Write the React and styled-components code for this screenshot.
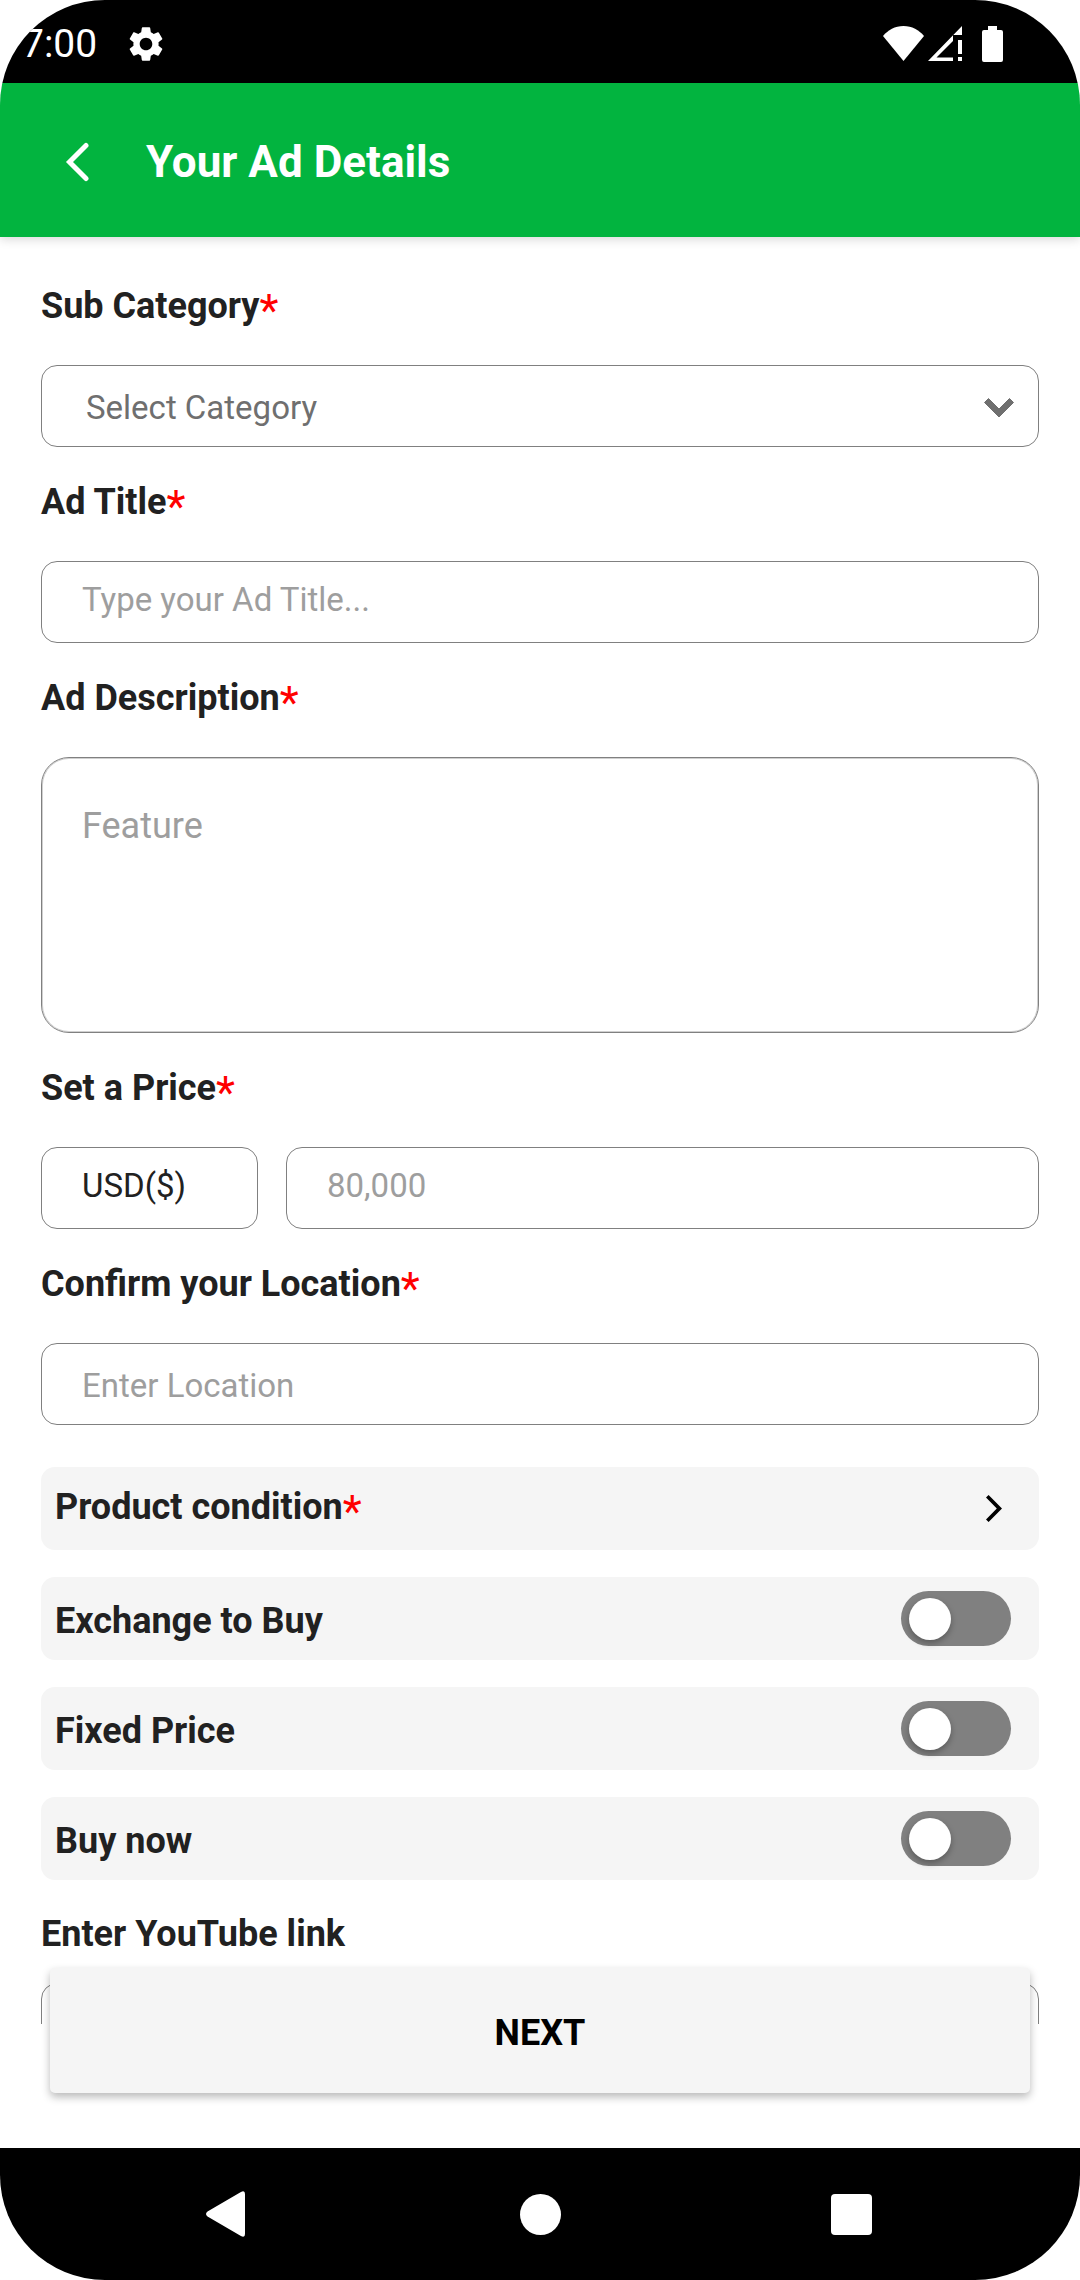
import React, { useState } from 'react'
import styled, { createGlobalStyle } from 'styled-components'
import { MdSettings } from 'react-icons/md'

const colors = {
  brand: '#02b43f',
  text: '#212121',
  muted: '#6f6f6f',
  placeholder: '#9e9e9e',
  border: '#808080',
  row: '#f5f5f5',
  track: '#808080',
  required: '#ff0000'
}

const GlobalStyle = createGlobalStyle`
  * {
    box-sizing: border-box;
  }
  body {
    margin: 0;
    background: #ffffff;
    font-family: Roboto, sans-serif;
    color: ${colors.text};
  }
  button, input, select, textarea {
    font-family: inherit;
    margin: 0;
  }
`

const Screen = styled.div`
  display: flex;
  flex-direction: column;
  height: 100vh;
  overflow: hidden;
  border-radius: 105px;
  background: #ffffff;
`

const StatusBar = styled.div`
  display: flex;
  flex: none;
  align-items: center;
  height: 83px;
  padding: 4px 77px 0 22px;
  background: #000000;
  color: #ffffff;
`

const Clock = styled.span`
  flex: 1;
  display: flex;
  align-items: center;
  gap: 28px;
  font-size: 39px;
  line-height: 46px;
`

const StatusIcons = styled.div`
  display: flex;
  align-items: center;
  gap: 4px;

  svg:last-child {
    margin-left: 16px;
  }
`

const Header = styled.header`
  display: flex;
  flex: none;
  align-items: center;
  gap: 57px;
  height: 154px;
  padding: 4px 63px 0;
  background: ${colors.brand};
  color: #ffffff;
  box-shadow: 0 2px 10px rgba(0, 0, 0, 0.16);
  z-index: 1;
`

const Title = styled.h1`
  margin: 0;
  font-size: 44px;
  font-weight: 700;
  line-height: 52px;
`

const IconButton = styled.button`
  display: flex;
  padding: 0;
  border: 0;
  background: none;
  color: inherit;
`

const Form = styled.form`
  flex: 1;
  min-height: 0;
  overflow-y: auto;
  scrollbar-width: none;
  padding: 48px 41px 0;
`

const Field = styled.div`
  display: flex;
  flex-direction: column;
  gap: ${props => props.$tight ? '28px' : '38px'};
  margin-bottom: 34px;
`

const Label = styled.label`
  height: 42px;
  font-size: 36px;
  font-weight: 700;
  line-height: 42px;
`

const Star = styled.span`
  color: ${colors.required};
  font-size: 44px;
  font-weight: 400;
  line-height: 0;
  vertical-align: -8px;
`

const TextBox = styled.input`
  width: 100%;
  min-width: 0;
  height: 82px;
  padding: ${props => props.$raised ? '0 40px 6px' : '2px 40px 0'};
  border: 1px solid ${colors.border};
  border-radius: 16px;
  background: transparent;
  color: ${colors.text};
  font-size: 33px;
  outline: none;

  &::placeholder {
    color: ${colors.placeholder};
    opacity: 1;
  }
`

const CurrencyBox = styled(TextBox)`
  flex: none;
  width: 217px;
`

const TextArea = styled.textarea`
  display: block;
  width: 100%;
  height: 276px;
  padding: 47px 40px;
  border: 1px solid ${colors.border};
  border-radius: 28px;
  box-shadow: inset 0 0 0 1px #d0d0d0;
  background: transparent;
  color: ${colors.text};
  font-size: 36px;
  line-height: 42px;
  resize: none;
  outline: none;

  &::placeholder {
    color: ${colors.placeholder};
    opacity: 1;
  }
`

const SelectWrap = styled.div`
  display: grid;
  align-items: center;

  > * {
    grid-area: 1 / 1;
  }

  svg {
    justify-self: end;
    margin: 4px 25px 0 0;
    pointer-events: none;
  }
`

const Select = styled.select`
  width: 100%;
  height: 82px;
  padding: 2px 80px 0 44px;
  appearance: none;
  border: 1px solid ${colors.border};
  border-radius: 16px;
  background: transparent;
  color: ${colors.muted};
  font-size: 33px;
  outline: none;
`

const PriceRow = styled.div`
  display: flex;
  gap: 28px;
`

const Options = styled.div`
  display: flex;
  flex-direction: column;
  gap: 27px;
  margin: 42px 0 33px;
`

const OptionRow = styled.label`
  display: flex;
  align-items: center;
  justify-content: space-between;
  height: 83px;
  padding: 0 28px 0 14px;
  border-radius: 14px;
  background: ${colors.row};
  font-size: 36px;
  font-weight: 700;
  line-height: 42px;

  > span {
    padding-top: 4px;
  }
`

const LinkRow = styled(OptionRow)`
  width: 100%;
  border: 0;
  padding-right: 37px;
  color: ${colors.text};

  > span {
    padding: 0 0 4px;
  }
`

const Switch = styled.input`
  display: flex;
  align-items: center;
  flex: none;
  width: 110px;
  height: 55px;
  margin: 0;
  padding: 0 8px;
  appearance: none;
  border-radius: 28px;
  background: ${colors.track};

  &::before {
    content: '';
    width: 42px;
    height: 42px;
    border-radius: 50%;
    background: #ffffff;
    box-shadow: 0 3px 6px rgba(0, 0, 0, 0.3);
  }

  &:checked {
    justify-content: flex-end;
    background: ${colors.brand};
  }
`

const Footer = styled.footer`
  flex: none;
  padding: 0 50px 55px;
`

const NextButton = styled.button`
  display: block;
  position: relative;
  width: 100%;
  height: 125px;
  margin-top: -56px;
  padding: 4px 0 0;
  border: 0;
  border-radius: 5px;
  background: ${colors.row};
  box-shadow: 0 4px 8px rgba(0, 0, 0, 0.28);
  color: #000000;
  font-size: 36px;
  font-weight: 700;
`

const NavBar = styled.nav`
  display: flex;
  flex: none;
  align-items: center;
  justify-content: space-between;
  height: 132px;
  padding: 0 208px 0 206px;
  background: #000000;
  color: #ffffff;
`

const WifiIcon = () => (
  <svg width="41" height="35" viewBox="0 0 41 35" fill="currentColor">
    <path d="M20.500 35L0 10C5 4 12 0 20.500 0S36 4 41 10z" />
  </svg>
)

const SignalIcon = () => (
  <svg width="34" height="35" viewBox="0 0 34 35" fill="currentColor">
    <path d="M34 0V9H25V15L8.500 31.500H25V35H0z" />
    <path d="M30 14h4v14h-4zM30 31h4v4h-4z" />
  </svg>
)

const BatteryIcon = () => (
  <svg width="21" height="36" viewBox="0 0 21 36" fill="currentColor">
    <path d="M6 0h9v4h4q2 0 2 2v28q0 2-2 2H2q-2 0-2-2V6q0-2 2-2h4z" />
  </svg>
)

const BackIcon = () => (
  <svg width="26" height="40" viewBox="0 0 26 40" fill="none" stroke="currentColor" strokeWidth="5" strokeLinecap="round">
    <path d="M23 3.500L6.500 20 23 36.500" />
  </svg>
)

const ChevronDown = () => (
  <svg width="30" height="20" viewBox="0 0 30 20" fill={colors.muted} stroke={colors.muted} strokeLinejoin="round">
    <path d="M4.500.5L15 11 25.500.5l4 4L15 19 .5 4.500z" />
  </svg>
)

const ChevronRight = () => (
  <svg width="16" height="27" viewBox="0 0 16 27">
    <path d="M2.600 0L16 13.500 2.600 27 0 24.400 10.800 13.500 0 2.600z" />
  </svg>
)

/**
 * @description - Label with an optional required mark
 * @prop {string} text - label text
 * @prop {boolean} required - shows the red star
 */
function LabelText ({ text, required }) {
  return (
    <span>
      {text}
      {required && <Star>*</Star>}
    </span>
  )
}

/**
 * @description - Labelled form field
 * @prop {string} id - id of the control
 * @prop {string} label - label text
 */
function FormField ({ id, label, required = true, tight, children }) {
  return (
    <Field $tight={tight}>
      <Label htmlFor={id}><LabelText text={label} required={required} /></Label>
      {children}
    </Field>
  )
}

const switches = [
  { name: 'exchange', label: 'Exchange to Buy' },
  { name: 'fixed', label: 'Fixed Price' },
  { name: 'buyNow', label: 'Buy now' }
]

function App () {
  const [options, setOptions] = useState({ exchange: false, fixed: false, buyNow: false })
  const toggle = (name) => setOptions({ ...options, [name]: !options[name] })

  return (
    <Screen>
      <GlobalStyle />
      <StatusBar>
        <Clock>
          7:00
          <MdSettings size={42} />
        </Clock>
        <StatusIcons>
          <WifiIcon />
          <SignalIcon />
          <BatteryIcon />
        </StatusIcons>
      </StatusBar>
      <Header>
        <IconButton type="button" aria-label="Back"><BackIcon /></IconButton>
        <Title>Your Ad Details</Title>
      </Header>
      <Form id="ad-form">
        <FormField id="category" label="Sub Category">
          <SelectWrap>
            <Select id="category">
              <option>Select Category</option>
            </Select>
            <ChevronDown />
          </SelectWrap>
        </FormField>
        <FormField id="title" label="Ad Title">
          <TextBox id="title" placeholder="Type your Ad Title..." $raised />
        </FormField>
        <FormField id="description" label="Ad Description">
          <TextArea id="description" placeholder="Feature" />
        </FormField>
        <FormField id="price" label="Set a Price">
          <PriceRow>
            <CurrencyBox aria-label="Currency" defaultValue="USD($)" $raised />
            <TextBox id="price" placeholder="80,000" $raised />
          </PriceRow>
        </FormField>
        <FormField id="location" label="Confirm your Location">
          <TextBox id="location" placeholder="Enter Location" />
        </FormField>
        <Options>
          <LinkRow as="button" type="button">
            <LabelText text="Product condition" required />
            <ChevronRight />
          </LinkRow>
          {switches.map(({ name, label }) => (
            <OptionRow key={name}>
              <LabelText text={label} />
              <Switch
                type="checkbox"
                role="switch"
                checked={options[name]}
                onChange={() => toggle(name)}
              />
            </OptionRow>
          ))}
        </Options>
        <FormField id="youtube" label="Enter YouTube link" required={false} tight>
          <TextBox id="youtube" type="url" />
        </FormField>
      </Form>
      <Footer>
        <NextButton type="submit" form="ad-form">NEXT</NextButton>
      </Footer>
      <NavBar>
        <IconButton type="button" aria-label="Go back">
          <svg width="43" height="46" viewBox="0 0 43 46" fill="currentColor">
            <path d="M34.500 1.200Q39-1.500 39 3V43Q39 47.500 34.500 44.800L1.500 25.500Q-1.500 23 1.500 20.500z" />
          </svg>
        </IconButton>
        <IconButton type="button" aria-label="Home">
          <svg width="41" height="41" viewBox="0 0 41 41" fill="currentColor">
            <circle cx="20.500" cy="20.500" r="20.500" />
          </svg>
        </IconButton>
        <IconButton type="button" aria-label="Recent apps">
          <svg width="41" height="41" viewBox="0 0 41 41" fill="currentColor">
            <rect width="41" height="41" rx="4" />
          </svg>
        </IconButton>
      </NavBar>
    </Screen>
  )
}

export default App
